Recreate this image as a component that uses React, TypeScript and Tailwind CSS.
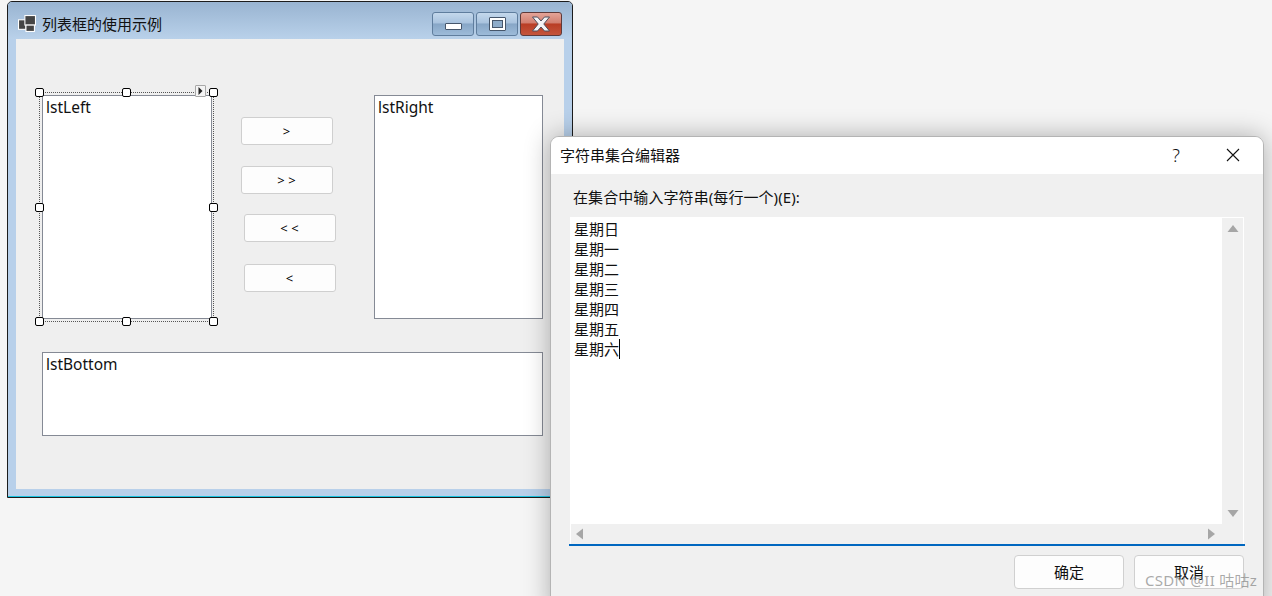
import React from "react";

const FONT = "[font-family:'Noto_Sans','Noto_Sans_CJK_SC',sans-serif]";

function Handle({ cls }: { cls: string }) {
  return <div className={`absolute w-[9px] h-[9px] bg-white border border-black rounded-[2px] ${cls}`} />;
}

function WinBtn({ cls, children }: { cls: string; children: React.ReactNode }) {
  return (
    <div className={`relative w-[42px] h-[24px] rounded-[3px] border flex items-center justify-center ${cls}`}>
      {children}
    </div>
  );
}

function FormButton({ cls, label }: { cls: string; label: string }) {
  return (
    <div className={`absolute w-[92px] h-[28px] bg-[#fdfdfd] border border-[#cfcfcf] rounded-[3px] flex items-center justify-center text-[13px] text-black pt-[1px] pr-[1px] ${cls}`}>
      {label}
    </div>
  );
}

function ListBox({ cls, label }: { cls: string; label: string }) {
  return (
    <div className={`absolute bg-white border border-[#858a95] pl-[3px] pt-[1px] text-[15.5px] leading-[20px] text-[#111] ${cls}`}>
      {label}
    </div>
  );
}

function Arrow({ points, cls }: { points: string; cls: string }) {
  return (
    <svg width="12" height="12" viewBox="0 0 12 12" className={cls}>
      <polygon points={points} fill="#a6a6a6" />
    </svg>
  );
}

export default function App() {
  return (
    <div className={`relative w-[1272px] h-[596px] overflow-hidden bg-[#f5f5f5] ${FONT}`}>
      {/* Form designer window */}
      <div className="absolute left-[7px] top-[1px] w-[566px] h-[497px] border border-[#1c1c1c] rounded-t-[5px] bg-[#b8d0ea] flex flex-col">
        <div className="h-[37px] shrink-0 rounded-t-[4px] bg-gradient-to-b from-[#99b4d1] to-[#b9d1ea] flex items-start pl-[11px] pr-[10px]">
          <svg width="18" height="17" viewBox="0 0 17 16" className="shrink-0 mt-[13px] ml-[-1px]">
            <rect x="0.5" y="4.5" width="7" height="9" fill="#444" stroke="#fff" />
            <rect x="6.5" y="0.5" width="10" height="9" fill="#444" stroke="#fff" />
            <rect x="7.5" y="9.5" width="8" height="6" fill="#444" stroke="#fff" />
          </svg>
          <span className="ml-[6px] text-[15px] leading-[20px] text-[#111] mt-[12px]">列表框的使用示例</span>
          <div className="ml-auto flex gap-[2px] mt-[10px]">
            <WinBtn cls="border-[#5f7d9d] bg-[linear-gradient(#c4d8ec_0%,#a9c3de_45%,#87a6c6_50%,#9dbbd9_100%)]">
              <div className="w-[17px] h-[7px] mt-[4px] bg-white border border-[#46566b] rounded-[1px]" />
            </WinBtn>
            <WinBtn cls="border-[#5f7d9d] bg-[linear-gradient(#c4d8ec_0%,#a9c3de_45%,#87a6c6_50%,#9dbbd9_100%)]">
              <div className="w-[17px] h-[14px] bg-white border border-[#46566b] rounded-[1px] flex items-center justify-center">
                <div className="w-[11px] h-[8px] bg-[#8eacca] border border-[#46566b]" />
              </div>
            </WinBtn>
            <WinBtn cls="border-[#5e3a3a] bg-[linear-gradient(#e5a498_0%,#d27f70_45%,#b93d25_50%,#c4553c_100%)]">
              <svg width="20" height="16" viewBox="0 0 20 16">
                <path d="M1.5 1 H6.5 L10 5 L13.5 1 H18.5 L12.8 8 L18.5 15 H13.5 L10 11 L6.5 15 H1.5 L7.2 8 Z" fill="#f4f4f6" stroke="#4f4f5c" strokeWidth="1" strokeLinejoin="round" />
              </svg>
            </WinBtn>
          </div>
        </div>
        <div className="relative mx-[8px] w-[548px] h-[450px] shrink-0 bg-[#efefef]">
          {/* design-surface controls sit on a free canvas */}
          <div className="absolute left-[23px] top-[53px] w-[175px] h-[230px] border border-dotted border-[#555]" />
          <ListBox cls="left-[26px] top-[56px] w-[170px] h-[224px]" label="lstLeft" />
          <Handle cls="left-[19px] top-[49px]" />
          <Handle cls="left-[106px] top-[49px]" />
          <Handle cls="left-[193px] top-[49px]" />
          <Handle cls="left-[19px] top-[164px]" />
          <Handle cls="left-[193px] top-[164px]" />
          <Handle cls="left-[19px] top-[278px]" />
          <Handle cls="left-[106px] top-[278px]" />
          <Handle cls="left-[193px] top-[278px]" />
          <div className="absolute left-[179px] top-[46px] w-[11px] h-[12px] bg-[#f4f4f4] border border-[#a8a8a8] rounded-[1px] flex items-center justify-center">
            <svg width="5" height="8" viewBox="0 0 5 8"><polygon points="0.5,0 4.5,4 0.5,8" fill="#222" /></svg>
          </div>
          <FormButton cls="left-[225px] top-[78px]" label=">" />
          <FormButton cls="left-[225px] top-[127px]" label="> >" />
          <FormButton cls="left-[228px] top-[175px]" label="< <" />
          <FormButton cls="left-[228px] top-[225px]" label="<" />
          <ListBox cls="left-[358px] top-[56px] w-[169px] h-[224px]" label="lstRight" />
          <ListBox cls="left-[26px] top-[313px] w-[501px] h-[84px]" label="lstBottom" />
        </div>
        <div className="mt-auto h-[1px] bg-[#19c3e0]" />
      </div>

      {/* String collection editor dialog */}
      <div className="absolute left-[550px] top-[136px] w-[714px] h-[480px] bg-[#f0f0f0] border border-[#b4b4b4] rounded-[9px] shadow-[0_0_26px_rgba(0,0,0,0.3)] overflow-hidden flex flex-col">
        <div className="h-[37px] shrink-0 bg-white flex items-center pl-[9px] pb-[1px] text-[15px] leading-[20px] text-[#111]">
          <span>字符串集合编辑器</span>
          <span className="ml-auto text-[18px] font-light mr-[46px]">?</span>
          <svg width="14" height="14" viewBox="0 0 14 14" className="mr-[23px]">
            <path d="M1 1 L13 13 M13 1 L1 13" stroke="#111" strokeWidth="1.1" fill="none" />
          </svg>
        </div>
        <div className="flex flex-col pl-[19px] pt-[13px]">
          <div className="ml-[3px] h-[20px] text-[15px] leading-[20px] tracking-[0.08px] text-[#111] whitespace-nowrap">在集合中输入字符串(每行一个)(E):</div>
          <div className="mt-[10px] w-[674px] h-[327px] border-t border-x border-white bg-[#f0f0f0] flex flex-col">
            <div className="flex flex-1 min-h-0">
              <div className="flex-1 bg-white pl-[3px] pt-[1px] text-[15px] leading-[20px] text-[#111]">
                <div>星期日</div>
                <div>星期一</div>
                <div>星期二</div>
                <div>星期三</div>
                <div>星期四</div>
                <div>星期五</div>
                <div className="flex items-center">星期六<span className="w-[1px] h-[20px] bg-black" /></div>
              </div>
              <div className="w-[21px] flex flex-col items-center justify-between py-[5px]">
                <Arrow points="6,2 11.5,9 0.5,9" cls="" />
                <Arrow points="0.5,3 11.5,3 6,10" cls="" />
              </div>
            </div>
            <div className="h-[20px] shrink-0 flex items-center justify-between px-[3px] pr-[26px]">
              <Arrow points="2,6 9,0.5 9,11.5" cls="" />
              <Arrow points="3,0.5 3,11.5 10,6" cls="" />
            </div>
          </div>
          <div className="ml-[-1px] w-[676px] h-[2px] bg-[#0067c0]" />
          <div className="mt-[9px] w-[674px] flex justify-end gap-[10px] text-[15px] text-[#111]">
            <div className="w-[110px] h-[34px] bg-[#fdfdfd] border border-[#d0d0d0] rounded-[4px] flex items-center justify-center">确定</div>
            <div className="w-[110px] h-[34px] bg-[#fdfdfd] border border-[#d0d0d0] rounded-[4px] flex items-center justify-center">取消</div>
          </div>
        </div>
      </div>

      {/* Watermark */}
      <div className="absolute left-[1145px] top-[570px] text-[15px] leading-[20px] tracking-[0.3px] text-[#70707099] whitespace-nowrap">CSDN @II 咕咕z</div>
    </div>
  );
}
